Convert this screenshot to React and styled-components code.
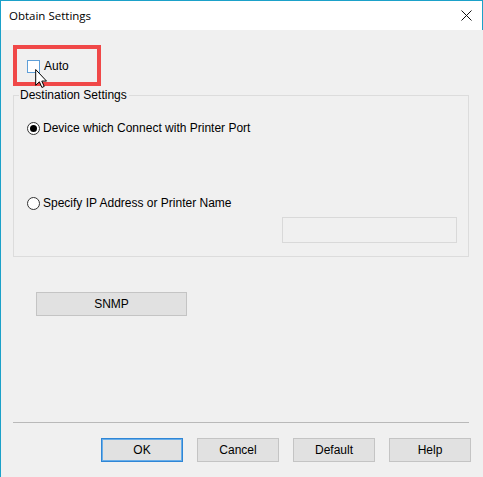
import React from "react";
import styled, { createGlobalStyle } from "styled-components";

const GlobalStyle = createGlobalStyle`
  html, body {
    margin: 0;
    padding: 0;
    background: #f0f0f0;
  }
  * {
    box-sizing: border-box;
  }
`;

const buttons = [
  { label: "OK", primary: true },
  { label: "Cancel" },
  { label: "Default" },
  { label: "Help" },
];

const App = () => {
  return (
    <>
      <GlobalStyle />
      <Window>
        <TitleBar>
          <Title>Obtain Settings</Title>
          <CloseButton>
            <svg width="11" height="11" viewBox="0 0 11 11">
              <path d="M0.5 0.5 L10.5 10.5 M10.5 0.5 L0.5 10.5" stroke="#111" strokeWidth="1" />
            </svg>
          </CloseButton>
        </TitleBar>
        <Body>
          <Highlight>
            <CheckRow>
              <CheckBox />
              <Label>Auto</Label>
            </CheckRow>
            <Cursor width="14" height="21" viewBox="0 0 13 20">
              <path
                d="M0.5 0.5 L0.5 15.5 L4 12.2 L6.4 17.6 L8.6 16.6 L6.3 11.5 L10.8 11.5 Z"
                fill="#fff"
                stroke="#000"
                strokeWidth="0.95"
                strokeLinejoin="miter"
              />
            </Cursor>
          </Highlight>

          <Group>
            <Legend>Destination Settings</Legend>
            <RadioRow top="19px">
              <Radio checked />
              <Label>Device which Connect with Printer Port</Label>
            </RadioRow>
            <RadioRow top="61px">
              <Radio />
              <Label>Specify IP Address or Printer Name</Label>
            </RadioRow>
            <AddressInput disabled />
          </Group>

          <SnmpButton>SNMP</SnmpButton>

          <Separator />

          <ButtonRow>
            {buttons.map((b) => (
              <DialogButton key={b.label} primary={b.primary}>
                {b.label}
              </DialogButton>
            ))}
          </ButtonRow>
        </Body>
      </Window>
    </>
  );
};

const Window = styled.div`
  width: 483px;
  height: 477px;
  border-left: 1px solid #1ba1c9;
  border-top: 1px solid #1ba1c9;
  background: #f0f0f0;
  display: flex;
  flex-direction: column;
  font-family: "Liberation Sans", Arial, sans-serif;
  font-size: 12px;
  color: #000;
  overflow: hidden;
`;

const TitleBar = styled.div`
  height: 29px;
  flex-shrink: 0;
  background: #fff;
  border-right: 1px solid #1ba1c9;
  display: flex;
  align-items: center;
  justify-content: space-between;
  padding: 0 10px 1px 8px;
`;

const Title = styled.span`
  font-family: "Open Sans", "Noto Sans", sans-serif;
  font-size: 11.5px;
  color: #000;
`;

const CloseButton = styled.span`
  display: flex;
  align-items: center;
  margin-top: 1px;
`;

const Body = styled.div`
  display: flex;
  flex-direction: column;
  padding: 15px 0 0 12px;
`;

const Highlight = styled.div`
  position: relative;
  width: 88px;
  height: 41px;
  flex-shrink: 0;
  border: 4px solid #f04848;
  padding: 10px 0 0 10px;
`;

const CheckRow = styled.div`
  display: flex;
  align-items: center;
  height: 14px;
`;

const CheckBox = styled.span`
  width: 13px;
  height: 13px;
  border: 1px solid #5f9fd8;
  background: #fff;
  margin-right: 4px;
`;

const Label = styled.span`
  line-height: 14px;
  white-space: nowrap;
`;

const Cursor = styled.svg`
  position: absolute;
  left: 18px;
  top: 20px;
`;

const Group = styled.div`
  width: 456px;
  height: 162px;
  flex-shrink: 0;
  margin-top: 9px;
  border: 1px solid #dcdcdc;
  display: flex;
  flex-direction: column;
  padding-left: 13px;
`;

const Legend = styled.span`
  align-self: flex-start;
  margin: -8px 0 0 -8px;
  padding: 0 2px 0 1px;
  background: #f0f0f0;
  line-height: 14px;
  color: #000;
`;

const RadioRow = styled.div`
  display: flex;
  align-items: center;
  height: 14px;
  margin-top: ${(props) => props.top};
`;

const Radio = styled.span`
  width: 13px;
  height: 13px;
  border-radius: 50%;
  border: 1px solid #333;
  background: #fff;
  margin-right: 3px;
  display: flex;
  align-items: center;
  justify-content: center;
  &::after {
    content: "";
    width: 7px;
    height: 7px;
    border-radius: 50%;
    background: ${(props) => (props.checked ? "#000" : "transparent")};
  }
`;

const AddressInput = styled.input`
  align-self: flex-end;
  width: 175px;
  height: 26px;
  margin: 7px 11px 0 0;
  border: 1px solid #d9d9d9;
  background: #f0f0f0;
  outline: none;
`;

const ButtonBase = styled.button`
  height: 24px;
  flex-shrink: 0;
  padding: 0;
  background: #e1e1e1;
  border: 1px solid #c4c4c4;
  font-family: "Liberation Sans", Arial, sans-serif;
  font-size: 12px;
  color: #000;
  display: flex;
  align-items: center;
  justify-content: center;
`;

const SnmpButton = styled(ButtonBase)`
  width: 151px;
  margin: 35px 0 0 23px;
`;

const Separator = styled.hr`
  width: 456px;
  height: 0;
  flex-shrink: 0;
  margin: 106px 0 0 0;
  border: none;
  border-top: 1px solid #b9b9b9;
`;

const ButtonRow = styled.div`
  display: flex;
  gap: 14px;
  margin: 15px 0 0 88px;
`;

const DialogButton = styled(ButtonBase)`
  width: 82px;
  border-color: ${(props) => (props.primary ? "#2f86d6" : "#c4c4c4")};
  box-shadow: ${(props) => (props.primary ? "inset 0 0 0 1px #6aaee8" : "none")};
`;

export default App;
